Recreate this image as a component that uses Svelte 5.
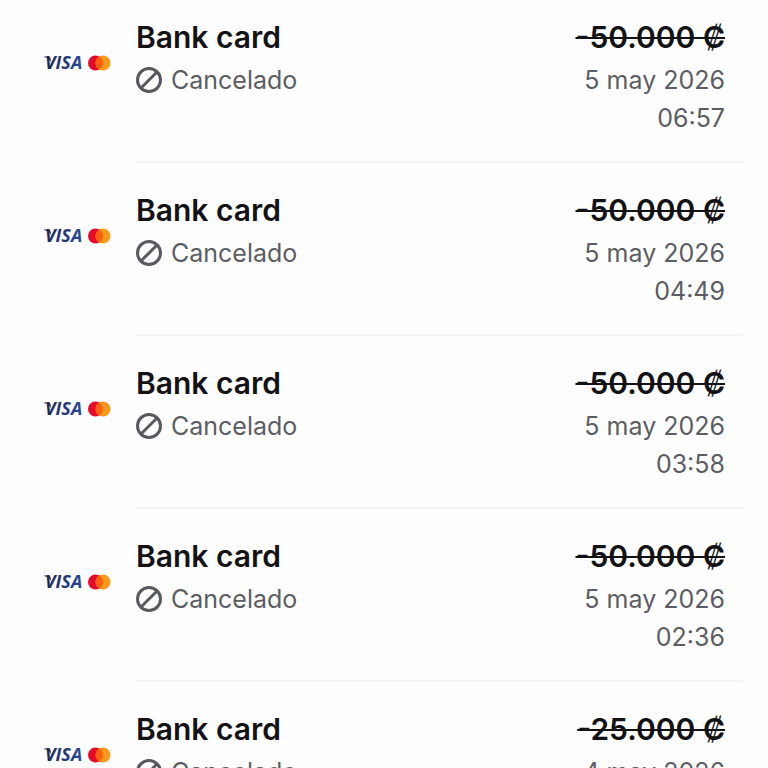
<script>
	const payments = [
		{ id: 1, amount: '-50.000 ₡', date: '5 may 2026', time: '06:57' },
		{ id: 2, amount: '-50.000 ₡', date: '5 may 2026', time: '04:49' },
		{ id: 3, amount: '-50.000 ₡', date: '5 may 2026', time: '03:58' },
		{ id: 4, amount: '-50.000 ₡', date: '5 may 2026', time: '02:36' },
		{ id: 5, amount: '-25.000 ₡', date: '4 may 2026', time: '' }
	];
</script>

<ul class="list">
	{#each payments as payment (payment.id)}
		<li class="row">
			<svg class="brands" viewBox="0 0 68 24" role="img" aria-label="Visa, Mastercard">
				<defs>
					<linearGradient id="visa-{payment.id}" x1="0" y1="0" x2="1" y2="0">
						<stop offset="0" stop-color="#20274f" />
						<stop offset="0.5" stop-color="#263878" />
						<stop offset="1" stop-color="#2a4a96" />
					</linearGradient>
				</defs>
				<path d="M0 5.600h4.600c1 0 1.600.500 1.800 1.400l1 4.600C6 8.200 3.600 6.500 0 5.900z" fill="#20274f" />
				<text class="visa" x="1" y="18" fill="url(#visa-{payment.id})">VISA</text>
				<circle cx="51.500" cy="12" r="7.500" fill="#e5092a" />
				<circle cx="59" cy="12" r="7.500" fill="#f79a1c" />
				<path d="M55.250 5.500a7.500 7.500 0 0 1 0 13a7.500 7.500 0 0 1 0-13z" fill="#f9600f" />
			</svg>
			<div class="body">
				<div class="info">
					<div class="title">Bank card</div>
					<div class="status">
						<svg class="icon" viewBox="0 0 26 26" aria-hidden="true">
							<circle cx="13" cy="13" r="11.500" />
							<path d="M5 21L21 5" />
						</svg>
						<span>Cancelado</span>
					</div>
				</div>
				<div class="side">
					<s class="amount">{payment.amount}</s>
					<div class="when">{payment.date}</div>
					{#if payment.time}
						<div class="when">{payment.time}</div>
					{/if}
				</div>
			</div>
		</li>
	{/each}
</ul>

<style>
	:global(body) {
		background: #fefefe;
	}

	.list {
		margin: 0;
		padding: 0 25px 0 44px;
		list-style: none;
		font-family: Inter, "Liberation Sans", sans-serif;
		color: #131315;
	}

	.row {
		display: flex;
		gap: 24px;
		padding-top: 27px;
	}
	.row:first-child { padding-top: 17px; }

	.brands {
		flex: none;
		width: 68px;
		height: 24px;
		margin-top: 34px;
	}

	.visa {
		font-family: "Open Sans", sans-serif;
		font-size: 18px;
		font-weight: 700;
		font-style: italic;
	}

	.body {
		flex: 1;
		display: flex;
		justify-content: space-between;
		padding: 0 18px 24px 0;
		border-bottom: 2px solid #f3f3f4;
	}

	.title,
	.amount {
		display: block;
		margin-bottom: 4px;
		font-size: 30px;
		font-weight: 600;
		line-height: 40px;
	}

	.amount { text-decoration-thickness: 2px; }

	.status,
	.when {
		font-size: 25px;
		line-height: 38px;
		color: #5c5d62;
	}

	.status {
		display: flex;
		align-items: center;
		gap: 9px;
	}

	.side { text-align: right; }

	.icon {
		width: 26px;
		height: 26px;
		fill: none;
		stroke: #58595e;
		stroke-width: 3;
	}
</style>
